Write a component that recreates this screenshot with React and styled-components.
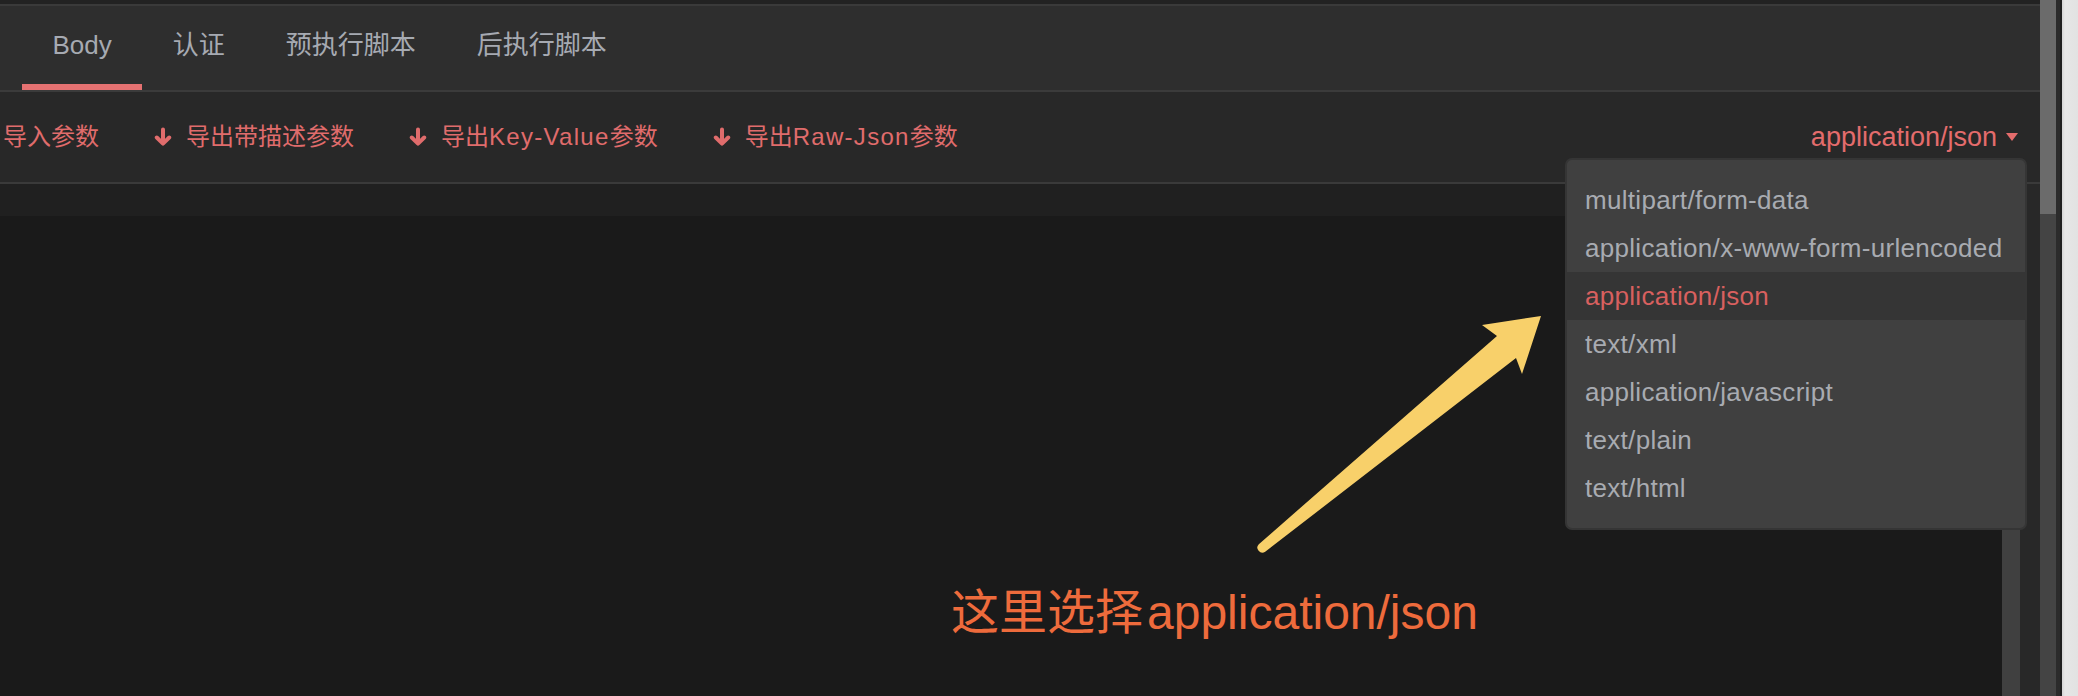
import React from "react";
import styled, { createGlobalStyle } from "styled-components";

const GlobalStyle = createGlobalStyle`
  html, body { margin: 0; padding: 0; background: #1a1a1a; }
  body { font-family: "Liberation Sans", "Noto Sans CJK SC", sans-serif; }
  #root { width: 2078px; height: 696px; overflow: hidden; }
`;

const Frame = styled.div`
  position: relative;
  display: flex;
  width: 2078px;
  height: 696px;
  overflow: hidden;
`;

const Main = styled.div`
  display: flex;
  flex-direction: column;
  width: 2040px;
  flex: none;
`;

const TopStrip = styled.div`
  height: 4px;
  background: #222222;
`;

const Rule = styled.div`
  height: 2px;
  background: ${(p) => p.$color || "#3a3a3a"};
  flex: none;
`;

const TabBar = styled.div`
  display: flex;
  height: 84px;
  padding-left: 22px;
  background: #2e2e2e;
  flex: none;
`;

const Tab = styled.div`
  display: flex;
  align-items: center;
  box-sizing: border-box;
  height: 84px;
  padding: 0 30.5px;
  border-bottom: 6px solid ${(p) => (p.$active ? "#e57171" : "transparent")};
  color: #a6aab2;
  font-size: 26px;
  line-height: 1;
`;

const Toolbar = styled.div`
  position: relative;
  display: flex;
  align-items: center;
  height: 90px;
  padding: 0 22px 0 3px;
  background: #282828;
  flex: none;
  z-index: 2;
`;

const Actions = styled.div`
  display: flex;
  align-items: center;
  gap: 55px;
`;

const Action = styled.div`
  display: flex;
  align-items: center;
  gap: 14px;
  color: #e06c6c;
  font-size: 24px;
  line-height: 1;
`;

const Latin = styled.span`
  letter-spacing: 1.3px;
`;

const ArrowIcon = styled.svg`
  width: 18px;
  height: 20px;
  flex: none;
`;

const Select = styled.div`
  display: flex;
  align-items: center;
  gap: 9px;
  margin-left: auto;
  color: #e46c6c;
  font-size: 27px;
  line-height: 1;
`;

const Caret = styled.span`
  width: 0;
  height: 0;
  border-left: 6px solid transparent;
  border-right: 6px solid transparent;
  border-top: 8px solid #e46c6c;
`;

const Menu = styled.ul`
  position: absolute;
  top: 66px;
  right: 13px;
  width: 458px;
  margin: 0;
  padding: 16px 0;
  list-style: none;
  background: #404040;
  border: 2px solid #353535;
  border-radius: 7px;
`;

const MenuItem = styled.li`
  display: flex;
  align-items: center;
  height: 48px;
  padding-left: 18px;
  font-size: 26px;
  letter-spacing: 0.3px;
  color: ${(p) => (p.$selected ? "#d8605f" : "#a8abb1")};
  background: ${(p) => (p.$selected ? "#353535" : "transparent")};
`;

const Lower = styled.div`
  display: flex;
  flex: 1;
`;

const EditorColumn = styled.div`
  display: flex;
  flex-direction: column;
  flex: 1;
`;

const Band = styled.div`
  height: 32px;
  background: #202020;
`;

const EditorRow = styled.div`
  display: flex;
  flex: 1;
`;

const Editor = styled.div`
  flex: 1;
  background: #1a1a1a;
`;

const InnerTrack = styled.div`
  width: 18px;
  background: #404040;
`;

const Gutter = styled.div`
  width: 20px;
  background: #282828;
`;

const ScrollTrack = styled.div`
  display: flex;
  flex-direction: column;
  width: 16px;
  flex: none;
  background: #444444;
`;

const Thumb = styled.div`
  height: 214px;
  background: #6b6b6b;
`;

const Edge = styled.div`
  width: 6px;
  flex: none;
  background: linear-gradient(to right, #2b2b2b 0 4px, #1e1e1e 4px);
`;

const Outside = styled.div`
  flex: 1;
  background: linear-gradient(to right, #d4d4d4, #e6e6e6 3px, #e2e2e2);
`;

const Overlay = styled.svg`
  position: absolute;
  left: 0;
  top: 0;
  width: 2078px;
  height: 696px;
  pointer-events: none;
  z-index: 5;
`;

const Note = styled.div`
  position: absolute;
  left: 951px;
  top: 589px;
  color: #ee6b3c;
  font-family: "Liberation Sans", "Noto Sans CJK SC", sans-serif;
  font-size: 48px;
  line-height: 1;
  white-space: nowrap;
  z-index: 5;
`;

const NoteLatin = styled.span`
  margin-left: 4px;
`;

const tabs = ["Body", "认证", "预执行脚本", "后执行脚本"];
const actions = [
  { pre: "导入参数", latin: "", post: "", icon: false },
  { pre: "导出带描述参数", latin: "", post: "", icon: true },
  { pre: "导出", latin: "Key-Value", post: "参数", icon: true },
  { pre: "导出", latin: "Raw-Json", post: "参数", icon: true },
];
const types = [
  "multipart/form-data",
  "application/x-www-form-urlencoded",
  "application/json",
  "text/xml",
  "application/javascript",
  "text/plain",
  "text/html",
];

const DownArrow = () => (
  <ArrowIcon viewBox="0 0 18 20">
    <path
      d="M9 2.5 V16.5 M2.8 10.5 L9 16.6 L15.2 10.5"
      fill="none"
      stroke="currentColor"
      strokeWidth="4"
      strokeLinecap="round"
      strokeLinejoin="round"
    />
  </ArrowIcon>
);

export default function App() {
  return (
    <>
      <GlobalStyle />
      <Frame>
        <Main>
          <TopStrip />
          <Rule />
          <TabBar>
            {tabs.map((t, i) => (
              <Tab key={t} $active={i === 0}>
                {t}
              </Tab>
            ))}
          </TabBar>
          <Rule $color="#3b3b3b" />
          <Toolbar>
            <Actions>
              {actions.map((a) => (
                <Action key={a.pre + a.latin}>
                  {a.icon && <DownArrow />}
                  <span>
                    {a.pre}
                    {a.latin && <Latin>{a.latin}</Latin>}
                    {a.post}
                  </span>
                </Action>
              ))}
            </Actions>
            <Select>
              application/json
              <Caret />
            </Select>
            <Menu>
              {types.map((t) => (
                <MenuItem key={t} $selected={t === "application/json"}>
                  {t}
                </MenuItem>
              ))}
            </Menu>
          </Toolbar>
          <Rule />
          <Lower>
            <EditorColumn>
              <Band />
              <EditorRow>
                <Editor />
                <InnerTrack />
              </EditorRow>
            </EditorColumn>
            <Gutter />
          </Lower>
        </Main>
        <ScrollTrack>
          <Thumb />
        </ScrollTrack>
        <Edge />
        <Outside />
        <Overlay viewBox="0 0 2078 696">
          <path
            d="M 1258.8 544.2 L 1497 336 L 1482 325 L 1541 316 L 1522 374 L 1516 358 L 1265.2 551.8 A 5 5 0 0 1 1258.8 544.2 Z"
            fill="#f8d06a"
          />
        </Overlay>
        <Note>
          这里选择<NoteLatin>application/json</NoteLatin>
        </Note>
      </Frame>
    </>
  );
}
